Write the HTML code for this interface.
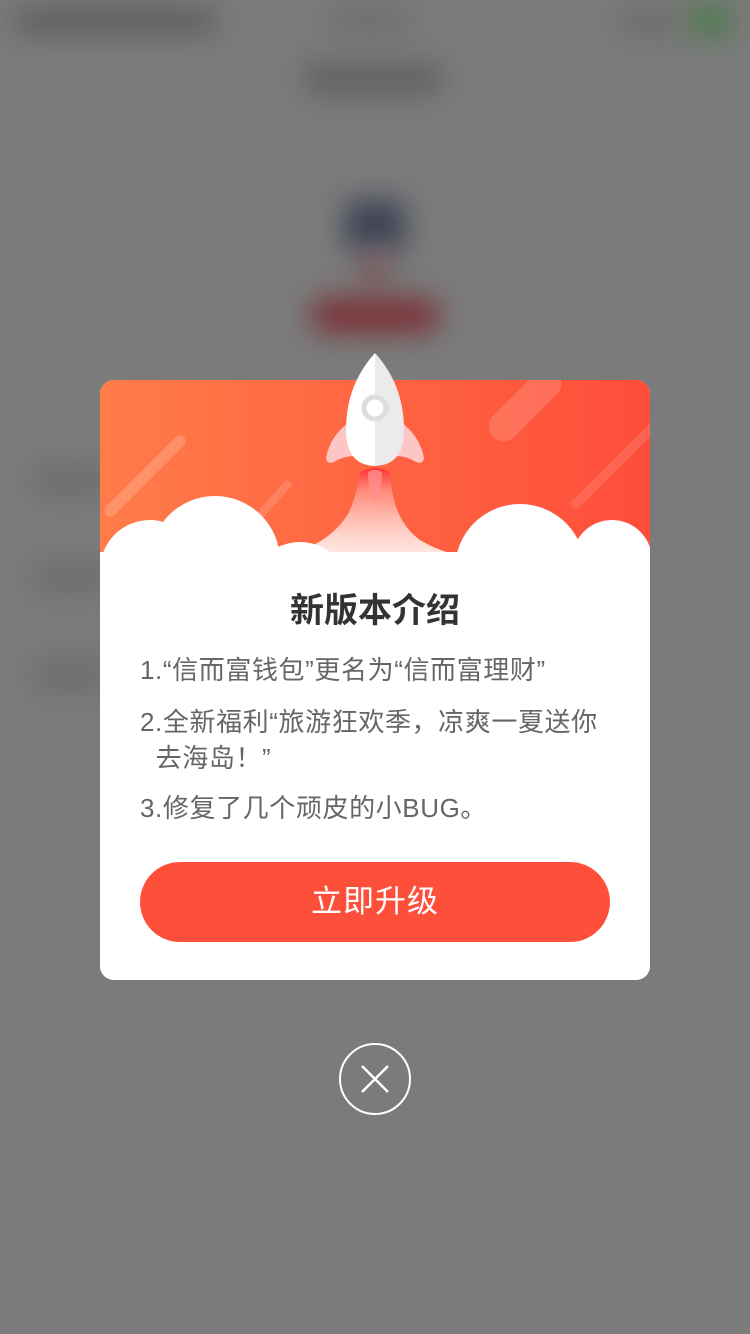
<!DOCTYPE html>
<html><head><meta charset="utf-8"><style>
*{margin:0;padding:0;box-sizing:border-box}
body{width:750px;height:1334px;background:#7b7b7b;position:relative;overflow:hidden;font-family:"Liberation Sans","Noto Sans CJK SC",sans-serif}
.b{position:absolute;filter:blur(14px)}
.card{position:absolute;left:100px;top:380px;width:550px;height:600px;background:#fff;border-radius:14px;overflow:hidden}
.hd{position:absolute;left:0;top:0;width:550px;height:200px;background:linear-gradient(90deg,#ff7c49,#fe4d3a)}
.c{position:absolute;background:#fff;border-radius:50%}
.t{position:absolute;left:0;width:550px;text-align:center;top:203px;font-size:34px;font-weight:600;color:#333}
.l{position:absolute;left:40px;font-size:26px;letter-spacing:0.6px;color:#666;line-height:36px;white-space:nowrap}
.btn{position:absolute;left:40px;top:482px;width:470px;height:80px;border-radius:40px;background:#fe4f3a;color:#fff;font-size:31px;text-align:center;line-height:80px;letter-spacing:1px}
</style></head><body>
<div class="b" style="left:15px;top:10px;width:200px;height:22px;background:#5a5a5a"></div>
<div class="b" style="left:330px;top:12px;width:80px;height:18px;background:#6a6a6a"></div>
<div class="b" style="left:620px;top:10px;width:60px;height:22px;background:#6a6a6a"></div>
<div class="b" style="left:690px;top:6px;width:40px;height:30px;background:#4a7a4a"></div>
<div class="b" style="left:305px;top:65px;width:135px;height:28px;background:#5f5f5f"></div>
<div class="b" style="left:345px;top:200px;width:60px;height:50px;background:#3d4355;border-radius:10px"></div>
<div class="b" style="left:360px;top:250px;width:30px;height:40px;background:#7a5c60"></div>
<div class="b" style="left:310px;top:298px;width:130px;height:35px;background:#7a3238;border-radius:18px"></div>
<div class="b" style="left:35px;top:468px;width:70px;height:26px;background:#6a6a6a"></div>
<div class="b" style="left:35px;top:565px;width:70px;height:26px;background:#6a6a6a"></div>
<div class="b" style="left:35px;top:662px;width:70px;height:26px;background:#6a6a6a"></div>
<div class="card">
<div class="hd">
<div style="position:absolute;left:-10px;top:90px;width:110px;height:12px;background:rgba(255,255,255,.18);border-radius:6px;transform:rotate(-45deg)"></div>
<div style="position:absolute;left:140px;top:120px;width:60px;height:8px;background:rgba(255,255,255,.15);border-radius:4px;transform:rotate(-48deg)"></div>
<div style="position:absolute;left:380px;top:10px;width:90px;height:30px;background:rgba(255,255,255,.15);border-radius:15px;transform:rotate(-45deg)"></div>
<div style="position:absolute;left:455px;top:80px;width:120px;height:10px;background:rgba(255,255,255,.12);border-radius:5px;transform:rotate(-45deg)"></div>
</div>
<svg style="position:absolute;left:0;top:0" width="550" height="200">
<defs><linearGradient id="f" x1="0" y1="0" x2="0" y2="1"><stop offset="0" stop-color="#ff3535"/><stop offset="0.2" stop-color="#ff8a7a"/><stop offset="0.7" stop-color="#fff" stop-opacity=".8"/><stop offset="1" stop-color="#fff"/></linearGradient></defs>
<path d="M260 92 Q275 84 290 92 Q292 140 320 160 Q340 172 360 175 L360 200 L190 200 L190 175 Q235 160 250 130 Q258 110 260 92Z" fill="url(#f)"/>
<path d="M268 92 Q275 88 282 92 Q282 115 275 122 Q268 115 268 92Z" fill="#ff8e8e" opacity=".8"/>
</svg>
<div class="c" style="left:0;top:140px;width:100px;height:100px"></div>
<div class="c" style="left:50px;top:116px;width:130px;height:130px"></div>
<div class="c" style="left:150px;top:162px;width:100px;height:100px"></div>
<div class="c" style="left:355px;top:124px;width:130px;height:130px"></div>
<div class="c" style="left:472px;top:140px;width:80px;height:80px"></div>
<div style="position:absolute;left:0;top:172px;width:550px;height:430px;background:#fff"></div>
<div class="t">新版本介绍</div>
<div class="l" style="top:272px">1.“信而富钱包”更名为“信而富理财”</div>
<div class="l" style="top:324px">2.全新福利“旅游狂欢季，凉爽一夏送你<br>&nbsp;&nbsp;去海岛！”</div>
<div class="l" style="top:410px">3.修复了几个顽皮的小BUG。</div>
<div class="btn">立即升级</div>
</div>
<svg style="position:absolute;left:320px;top:350px" width="110" height="130" viewBox="320 350 110 130">
<path d="M352 420 Q330 435 326 458 Q327 465 334 462 Q345 455 360 456Z" fill="#fec5c5"/>
<path d="M398 420 Q420 435 424 458 Q423 465 416 462 Q405 455 390 456Z" fill="#fec5c5"/>
<path d="M375 353 Q346 385 346 430 Q346 465 375 466Z" fill="#fff"/>
<path d="M375 353 Q404 385 404 430 Q404 465 375 466Z" fill="#ebebeb"/>
<circle cx="375" cy="408" r="11" fill="#fff" stroke="#e0dcdc" stroke-width="5"/>
</svg>
<div style="position:absolute;left:339px;top:1043px;width:72px;height:72px;border:2px solid #fff;border-radius:50%"></div>
<svg style="position:absolute;left:339px;top:1043px" width="72" height="72"><path d="M23 23L49 49M49 23L23 49" stroke="#fff" stroke-width="2.5"/></svg>
</body></html>
